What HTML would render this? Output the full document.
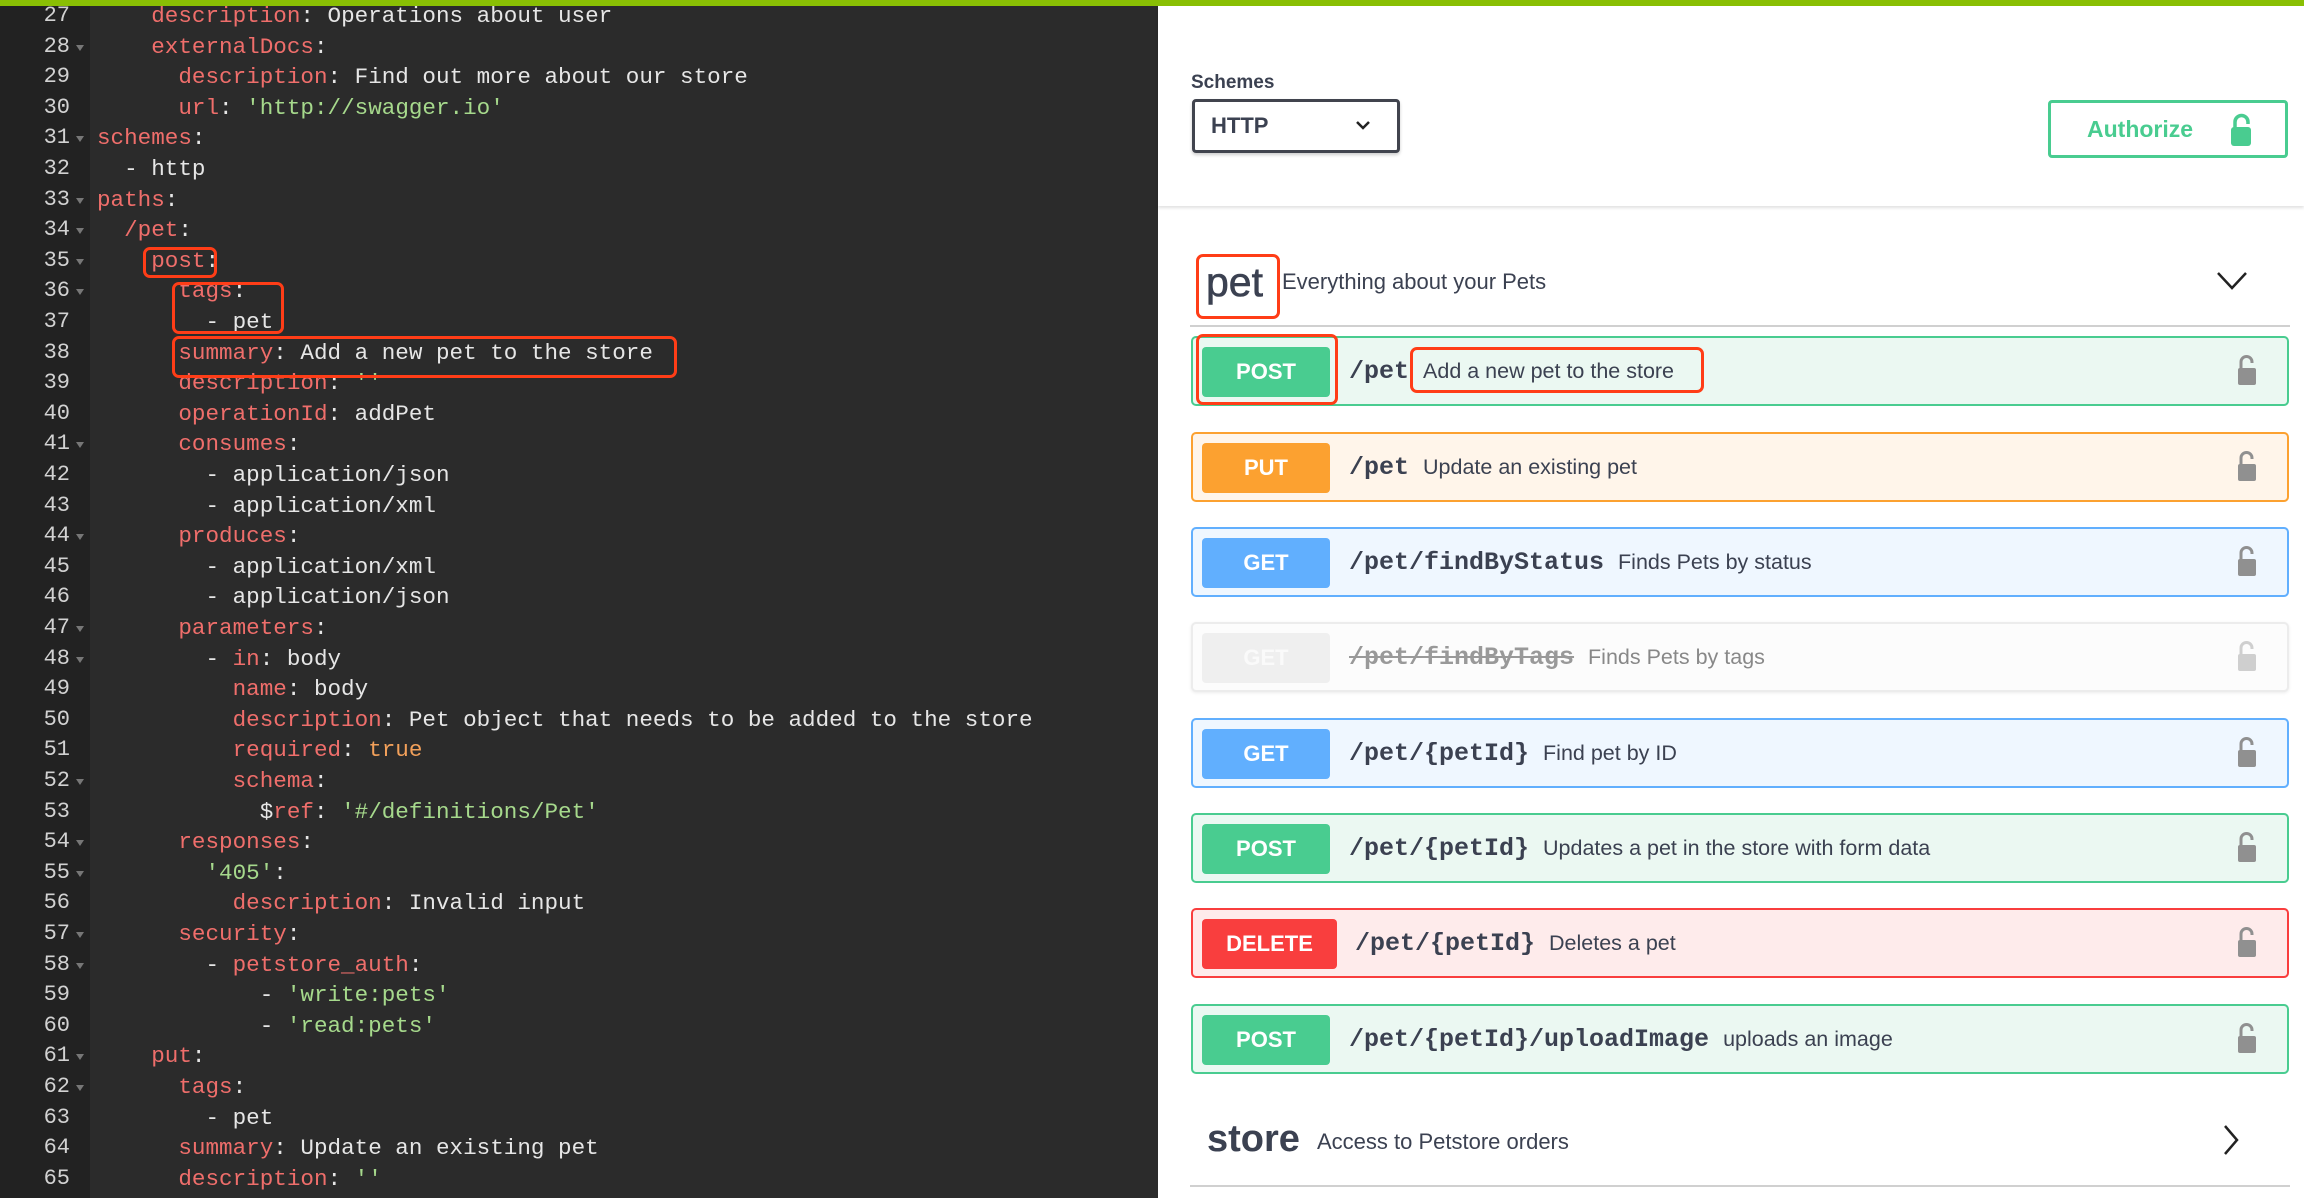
<!DOCTYPE html>
<html><head><meta charset="utf-8">
<style>
*{margin:0;padding:0;box-sizing:border-box}
html,body{width:2304px;height:1198px;overflow:hidden;background:#fff}
#ed{position:absolute;left:0;top:0;width:1158px;height:1198px;background:#2b2b2b}
#gut{position:absolute;left:0;top:0;width:90px;height:1198px;background:#222}
.ln{position:absolute;left:0;width:70px;text-align:right;color:#d2d2d2;font:22px "Liberation Mono",monospace;height:30.6px;line-height:30.6px}
.fd{position:absolute;left:76px;width:0;height:0;border-left:4px solid transparent;border-right:4px solid transparent;border-top:6px solid #777}
.cl{position:absolute;left:97px;white-space:pre;color:#e6e6e6;font:22.6px "Liberation Mono",monospace;height:30.6px;line-height:30.6px}
.k{color:#ef6e6b}.s{color:#a6d98c}.b{color:#f2a05a}
.rb{position:absolute;border:3px solid #ff3d17;border-radius:7px}
#bar{position:absolute;left:0;top:0;width:2304px;height:6px;background:#89bf04;z-index:5}
#rp{position:absolute;left:1158px;top:0;width:1146px;height:1198px;background:#fff;font-family:"Liberation Sans",sans-serif;color:#3b4151}
.op{position:absolute;left:33px;width:1098px;height:70px;border:2px solid;border-radius:5px}
.bd{position:absolute;left:9px;top:9px;width:128px;height:50px;border-radius:4px;color:#fff;font:bold 22px "Liberation Sans",sans-serif;text-align:center;line-height:50px}
.pt{position:absolute;left:156px;top:0;font:bold 25px "Liberation Mono",monospace;line-height:66px;color:#3b4151;white-space:nowrap}
.pt span{font:21.5px "Liberation Sans",sans-serif;line-height:66px;margin-left:14px}
.lk{position:absolute;left:1043px;top:17px}
</style></head><body>
<div id="bar"></div>
<div id="ed"><div id="gut"></div>
<div id="code"></div>
</div>
<script>
var L=[
[27,'    <span class="k">description</span>: Operations about user',0],
[28,'    <span class="k">externalDocs</span>:',1],
[29,'      <span class="k">description</span>: Find out more about our store',0],
[30,'      <span class="k">url</span>: <span class="s">\'http://swagger.io\'</span>',0],
[31,'<span class="k">schemes</span>:',1],
[32,'  - http',0],
[33,'<span class="k">paths</span>:',1],
[34,'  <span class="k">/pet</span>:',1],
[35,'    <span class="k">post</span>:',1],
[36,'      <span class="k">tags</span>:',1],
[37,'        - pet',0],
[38,'      <span class="k">summary</span>: Add a new pet to the store',0],
[39,'      <span class="k">description</span>: <span class="s">\'\'</span>',0],
[40,'      <span class="k">operationId</span>: addPet',0],
[41,'      <span class="k">consumes</span>:',1],
[42,'        - application/json',0],
[43,'        - application/xml',0],
[44,'      <span class="k">produces</span>:',1],
[45,'        - application/xml',0],
[46,'        - application/json',0],
[47,'      <span class="k">parameters</span>:',1],
[48,'        - <span class="k">in</span>: body',1],
[49,'          <span class="k">name</span>: body',0],
[50,'          <span class="k">description</span>: Pet object that needs to be added to the store',0],
[51,'          <span class="k">required</span>: <span class="b">true</span>',0],
[52,'          <span class="k">schema</span>:',1],
[53,'            $<span class="k">ref</span>: <span class="s">\'#/definitions/Pet\'</span>',0],
[54,'      <span class="k">responses</span>:',1],
[55,'        <span class="s">\'405\'</span>:',1],
[56,'          <span class="k">description</span>: Invalid input',0],
[57,'      <span class="k">security</span>:',1],
[58,'        - <span class="k">petstore_auth</span>:',1],
[59,'            - <span class="s">\'write:pets\'</span>',0],
[60,'            - <span class="s">\'read:pets\'</span>',0],
[61,'    <span class="k">put</span>:',1],
[62,'      <span class="k">tags</span>:',1],
[63,'        - pet',0],
[64,'      <span class="k">summary</span>: Update an existing pet',0],
[65,'      <span class="k">description</span>: <span class="s">\'\'</span>',0]];
var h='';
L.forEach(function(l,i){var t=1+i*30.6;
h+='<div class="ln" style="top:'+t+'px">'+l[0]+'</div>';
if(l[2])h+='<div class="fd" style="top:'+(t+13)+'px"></div>';
h+='<div class="cl" style="top:'+t+'px">'+l[1]+'</div>';});
h+='<div class="rb" style="left:143px;top:247px;width:74px;height:31px"></div>';
h+='<div class="rb" style="left:172px;top:282px;width:112px;height:52px"></div>';
h+='<div class="rb" style="left:172px;top:336px;width:505px;height:42px"></div>';
document.getElementById('code').innerHTML=h;
</script>
<div id="rp">
<div style="position:absolute;left:0;top:6px;width:1146px;height:200px;background:#fff;box-shadow:0 2px 3px rgba(0,0,0,.12)"></div>
<div style="position:absolute;left:33px;top:72px;font:bold 19px 'Liberation Sans',sans-serif;color:#3b4151">Schemes</div>
<div style="position:absolute;left:34px;top:99px;width:208px;height:54px;border:3px solid #41444e;border-radius:4px;box-shadow:0 2px 3px rgba(0,0,0,.2);font:bold 22px 'Liberation Sans',sans-serif;padding-left:16px;line-height:48px">HTTP
<svg style="position:absolute;left:160px;top:16px" width="16" height="14" viewBox="0 0 16 14"><path d="M2 4 L8 10 L14 4" fill="none" stroke="#222" stroke-width="2.5"/></svg></div>
<div style="position:absolute;left:890px;top:100px;width:240px;height:58px;border:3px solid #49cc90;border-radius:4px;color:#49cc90;font:bold 23px 'Liberation Sans',sans-serif;line-height:52px;padding-left:36px">Authorize
<svg style="position:absolute;left:178px;top:10px" width="26" height="34" viewBox="0 0 26 34"><path d="M6 15 V9 a6.5 6.5 0 0 1 13 0 v2" fill="none" stroke="#49cc90" stroke-width="3.5"/><rect x="2" y="14" width="20" height="19" rx="3" fill="#49cc90"/></svg></div>

<div style="position:absolute;left:48px;top:259px;font:41px 'Liberation Sans',sans-serif;color:#3b4151;-webkit-text-stroke:0.6px #3b4151">pet</div>
<div class="rb" style="left:38px;top:254px;width:84px;height:65px"></div>
<div style="position:absolute;left:124px;top:269px;font:22px 'Liberation Sans',sans-serif">Everything about your Pets</div>
<svg style="position:absolute;left:1058px;top:270px" width="32" height="22" viewBox="0 0 32 22"><path d="M2 3 L16 18 L30 3" fill="none" stroke="#222" stroke-width="2.5"/></svg>
<div style="position:absolute;left:32px;top:325px;width:1100px;height:2px;background:#d0d0d0"></div>

<div class="op" style="top:336px;background:#ebf8f2;border-color:#49cc90"><div class="bd" style="background:#49cc90">POST</div><div class="pt">/pet<span>Add a new pet to the store</span></div><svg class="lk" width="24" height="32" viewBox="0 0 24 32"><path d="M5 14 V7 a5.5 5.5 0 0 1 11 0 v1" fill="none" stroke="#909090" stroke-width="3"/><rect x="2" y="13" width="18" height="17" rx="2" fill="#909090"/></svg></div>
<div class="rb" style="left:38px;top:334px;width:142px;height:71px"></div>
<div class="rb" style="left:252px;top:347px;width:294px;height:46px"></div>

<div class="op" style="top:432px;background:#fff5ea;border-color:#fca130"><div class="bd" style="background:#fca130">PUT</div><div class="pt">/pet<span>Update an existing pet</span></div><svg class="lk" width="24" height="32" viewBox="0 0 24 32"><path d="M5 14 V7 a5.5 5.5 0 0 1 11 0 v1" fill="none" stroke="#909090" stroke-width="3"/><rect x="2" y="13" width="18" height="17" rx="2" fill="#909090"/></svg></div>

<div class="op" style="top:527px;background:#eff7ff;border-color:#61affe"><div class="bd" style="background:#61affe">GET</div><div class="pt">/pet/findByStatus<span>Finds Pets by status</span></div><svg class="lk" width="24" height="32" viewBox="0 0 24 32"><path d="M5 14 V7 a5.5 5.5 0 0 1 11 0 v1" fill="none" stroke="#909090" stroke-width="3"/><rect x="2" y="13" width="18" height="17" rx="2" fill="#909090"/></svg></div>

<div class="op" style="top:622px;background:#fcfcfc;border-color:#ececec;box-shadow:0 1px 3px rgba(0,0,0,.08)"><div class="bd" style="background:#efefef;color:#fafafa">GET</div><div class="pt" style="color:#999"><s>/pet/findByTags</s><span style="color:#888">Finds Pets by tags</span></div><svg class="lk" width="24" height="32" viewBox="0 0 24 32"><path d="M5 14 V7 a5.5 5.5 0 0 1 11 0 v1" fill="none" stroke="#cfcfcf" stroke-width="3"/><rect x="2" y="13" width="18" height="17" rx="2" fill="#cfcfcf"/></svg></div>

<div class="op" style="top:718px;background:#eff7ff;border-color:#61affe"><div class="bd" style="background:#61affe">GET</div><div class="pt">/pet/{petId}<span>Find pet by ID</span></div><svg class="lk" width="24" height="32" viewBox="0 0 24 32"><path d="M5 14 V7 a5.5 5.5 0 0 1 11 0 v1" fill="none" stroke="#909090" stroke-width="3"/><rect x="2" y="13" width="18" height="17" rx="2" fill="#909090"/></svg></div>

<div class="op" style="top:813px;background:#ebf8f2;border-color:#49cc90"><div class="bd" style="background:#49cc90">POST</div><div class="pt">/pet/{petId}<span>Updates a pet in the store with form data</span></div><svg class="lk" width="24" height="32" viewBox="0 0 24 32"><path d="M5 14 V7 a5.5 5.5 0 0 1 11 0 v1" fill="none" stroke="#909090" stroke-width="3"/><rect x="2" y="13" width="18" height="17" rx="2" fill="#909090"/></svg></div>

<div class="op" style="top:908px;background:#feebeb;border-color:#f93e3e"><div class="bd" style="background:#f93e3e;width:135px">DELETE</div><div class="pt" style="left:162px">/pet/{petId}<span>Deletes a pet</span></div><svg class="lk" width="24" height="32" viewBox="0 0 24 32"><path d="M5 14 V7 a5.5 5.5 0 0 1 11 0 v1" fill="none" stroke="#909090" stroke-width="3"/><rect x="2" y="13" width="18" height="17" rx="2" fill="#909090"/></svg></div>

<div class="op" style="top:1004px;background:#ebf8f2;border-color:#49cc90"><div class="bd" style="background:#49cc90">POST</div><div class="pt">/pet/{petId}/uploadImage<span>uploads an image</span></div><svg class="lk" width="24" height="32" viewBox="0 0 24 32"><path d="M5 14 V7 a5.5 5.5 0 0 1 11 0 v1" fill="none" stroke="#909090" stroke-width="3"/><rect x="2" y="13" width="18" height="17" rx="2" fill="#909090"/></svg></div>

<div style="position:absolute;left:49px;top:1118px;font:bold 38px 'Liberation Sans',sans-serif;color:#3b4151">store</div>
<div style="position:absolute;left:159px;top:1129px;font:22px 'Liberation Sans',sans-serif">Access to Petstore orders</div>
<svg style="position:absolute;left:1064px;top:1124px" width="18" height="32" viewBox="0 0 18 32"><path d="M3 2 L15 16 L3 30" fill="none" stroke="#222" stroke-width="2.5"/></svg>
<div style="position:absolute;left:32px;top:1185px;width:1100px;height:2px;background:#d0d0d0"></div>
</div>
</body></html>
